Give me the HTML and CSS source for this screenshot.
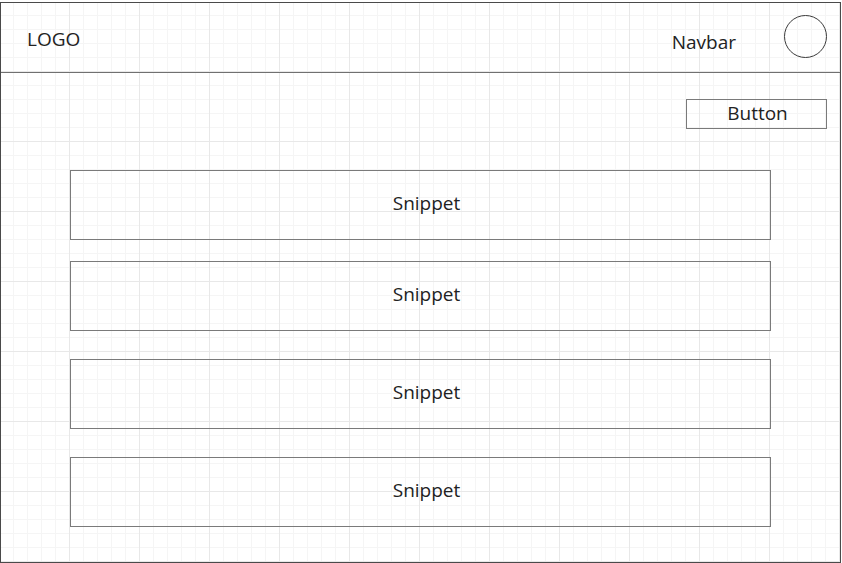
FILE: index.html
```html
<!DOCTYPE html>
<html lang="en">
<head>
<meta charset="utf-8">
<title>Wireframe</title>
<link rel="stylesheet" href="styles.css">
</head>
<body>
<div class="frame">
  <header class="header">
    <div class="logo">LOGO</div>
    <div class="spacer"></div>
    <div class="navbar">Navbar</div>
    <div class="avatar"></div>
  </header>
  <main class="main">
    <div class="actions">
      <div class="button">Button</div>
    </div>
    <div class="snippets">
      <div class="snippet snippet--first">Snippet</div>
      <div class="snippet">Snippet</div>
      <div class="snippet">Snippet</div>
      <div class="snippet">Snippet</div>
    </div>
  </main>
</div>
</body>
</html>
```

FILE: styles.css
```css
html, body {
  margin: 0;
  padding: 0;
  background: #ffffff;
}

body {
  font-family: "Open Sans", "Noto Sans", sans-serif;
  color: #222222;
}

.frame {
  box-sizing: border-box;
  width: 841px;
  height: 561px;
  margin-top: 2px;
  border: 1px solid #4a4a4a;
  background-color: #ffffff;
  background-origin: border-box;
  background-image:
    linear-gradient(to right, #e8e8e8 1px, transparent 1px),
    linear-gradient(to bottom, #e8e8e8 1px, transparent 1px),
    linear-gradient(to right, #f5f5f5 1px, transparent 1px),
    linear-gradient(to bottom, #f5f5f5 1px, transparent 1px);
  background-size: 70px 70px, 70px 70px, 14px 14px, 14px 14px;
  background-position: -1px -1px, -1px -1px, -1px -1px, -1px -1px;
  display: flex;
  flex-direction: column;
}

.header {
  box-sizing: border-box;
  height: 70px;
  border-bottom: 1px solid #707070;
  display: flex;
  align-items: flex-start;
  padding-left: 26px;
  padding-right: 13px;
}

.logo {
  font-size: 19px;
  line-height: 26px;
  margin-top: 23px;
}

.spacer {
  flex: 1;
}

.navbar {
  font-size: 19px;
  line-height: 26px;
  margin-top: 26px;
  margin-right: 48px;
}

.avatar {
  box-sizing: border-box;
  width: 43px;
  height: 43px;
  margin-top: 12px;
  border: 1px solid #3a3a3a;
  border-radius: 50%;
}

.main {
  display: flex;
  flex-direction: column;
}

.actions {
  display: flex;
  justify-content: flex-end;
  padding-right: 13px;
  margin-top: 26px;
}

.button {
  box-sizing: border-box;
  width: 141px;
  height: 30px;
  border: 1px solid #7a7a7a;
  display: flex;
  align-items: center;
  justify-content: center;
  padding-bottom: 3px;
  padding-left: 2px;
  font-size: 19px;
  line-height: 26px;
}

.snippets {
  display: flex;
  flex-direction: column;
  gap: 28px;
  margin-top: 41px;
  margin-left: 69px;
}

.snippet {
  box-sizing: border-box;
  width: 701px;
  height: 70px;
  border: 1px solid #7a7a7a;
  display: flex;
  align-items: center;
  justify-content: center;
  padding-left: 12px;
  padding-bottom: 4px;
  font-size: 19px;
  line-height: 26px;
}

.snippet--first {
  margin-bottom: -7px;
}
```
